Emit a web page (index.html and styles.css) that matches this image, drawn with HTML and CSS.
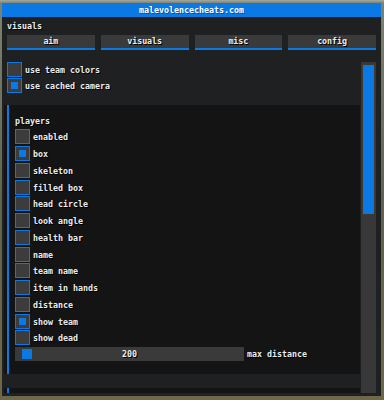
FILE: index.html
```html
<!DOCTYPE html>
<html lang="en">

<head>
    <meta charset="UTF-8">
    <meta name="viewport" content="width=device-width, initial-scale=1.0">
    <title>malevolencecheats.com</title>
    <link rel="stylesheet" href="styles.css">
</head>

<body>
    <div class="window">
        <div class="titlebar">malevolencecheats.com</div>

        <div class="window-body">
            <div class="section-label">visuals</div>

            <div class="tabs">
                <button type="button" class="tab">aim</button>
                <button type="button" class="tab">visuals</button>
                <button type="button" class="tab">misc</button>
                <button type="button" class="tab">config</button>
            </div>

            <div class="scroll">
                <div class="scroll-content">
                    <div class="rows">
                        <label class="check"><span class="box"></span>use team colors</label>
                        <label class="check"><span class="box on"></span>use cached camera</label>
                    </div>

                    <div class="group">
                        <div class="group-title">players</div>
                        <div class="group-rows">
                            <label class="check"><span class="box"></span>enabled</label>
                            <label class="check"><span class="box on"></span>box</label>
                            <label class="check"><span class="box"></span>skeleton</label>
                            <label class="check"><span class="box"></span>filled box</label>
                            <label class="check"><span class="box"></span>head circle</label>
                            <label class="check"><span class="box"></span>look angle</label>
                            <label class="check"><span class="box"></span>health bar</label>
                            <label class="check"><span class="box"></span>name</label>
                            <label class="check"><span class="box"></span>team name</label>
                            <label class="check"><span class="box"></span>item in hands</label>
                            <label class="check"><span class="box"></span>distance</label>
                            <label class="check"><span class="box on"></span>show team</label>
                            <label class="check"><span class="box"></span>show dead</label>
                            <div class="slider-row">
                                <div class="slider">
                                    <span class="grab"></span>
                                    <span class="slider-value">200</span>
                                </div>
                                <span>max distance</span>
                            </div>
                        </div>
                    </div>

                    <div class="group group-next"></div>
                </div>

                <div class="scrollbar">
                    <div class="thumb"></div>
                </div>
            </div>
        </div>
    </div>
</body>

</html>
```

FILE: styles.css
```css
body {
    margin: 0;
    height: 400px;
    background: linear-gradient(180deg, #a3aba2 0, #7d8270 3px, #5f6350 50%, #6e6849 100%);
    font-family: "DejaVu Sans Mono", "Liberation Mono", monospace;
    font-size: 8.3px;
    font-weight: bold;
    color: #ececec;
    overflow: hidden;
}

.window {
    width: 379px;
    height: 393px;
    margin: 3px 0 0 2px;
    background: #1f2022;
    display: flex;
    flex-direction: column;
}

.titlebar {
    height: 14px;
    line-height: 14px;
    background: #0b79e3;
    color: #fff;
    text-align: center;
    text-shadow: 1px 1px 0 rgba(0, 0, 0, 0.35);
}

.window-body {
    flex: 1;
    display: flex;
    flex-direction: column;
    padding: 0 5px 3px 5px;
    min-height: 0;
}

.section-label {
    line-height: 10px;
    margin-top: 4px;
    text-shadow: 1px 1px 0 #000;
}

.tabs {
    display: grid;
    grid-template-columns: repeat(4, 1fr);
    gap: 6px;
    margin-top: 4px;
}

.tab {
    height: 15px;
    padding: 0 0 2px;
    border: 0;
    border-bottom: 2px solid #0b79e3;
    background: #3a3a3a;
    color: inherit;
    font: inherit;
    line-height: 13px;
    text-shadow: 1px 1px 0 #000;
}

.scroll {
    flex: 1;
    display: flex;
    margin: 12px 0 0 -3px;
    min-height: 0;
    overflow: hidden;
}

.scroll-content {
    flex: 1;
    min-width: 0;
    overflow: hidden;
}

.rows {
    display: flex;
    flex-direction: column;
    gap: 1px;
    padding-left: 3px;
}

.check {
    display: flex;
    align-items: center;
    gap: 3px;
    height: 15px;
    text-shadow: 1px 1px 0 #000;
}

.box {
    width: 15px;
    height: 15px;
    box-sizing: border-box;
    border: 1px solid #0b79e3;
    background: #3c3c3c;
    display: flex;
    align-items: center;
    justify-content: center;
    flex: none;
}

.box.on::after {
    content: "";
    width: 7px;
    height: 7px;
    background: #0b79e3;
}

.group {
    margin-top: 12px;
    padding: 12px 0 12px 11px;
    background: linear-gradient(#0b79e3, #0b79e3) 3px 0 / 2px 100% no-repeat, #141414;
}

.group-title {
    line-height: 9px;
    margin-bottom: 3px;
    text-shadow: 1px 1px 0 #000;
}

.group-rows {
    display: grid;
    grid-template-rows: repeat(3, 17px 17px 17px 16px) 17px 15px;
    align-items: start;
}

.slider-row {
    display: flex;
    align-items: center;
    gap: 3px;
    text-shadow: 1px 1px 0 #000;
}

.slider {
    width: 229px;
    height: 14px;
    background: #3a3a3a;
    display: grid;
    align-items: center;
}

.grab,
.slider-value {
    grid-area: 1 / 1;
}

.grab {
    width: 10px;
    height: 10px;
    margin-left: 7px;
    background: #0b79e3;
    justify-self: start;
}

.slider-value {
    justify-self: center;
}

.group-next {
    margin-top: 14px;
    height: 20px;
    padding: 0;
}

.scrollbar {
    width: 15px;
    margin-left: 1px;
    background: #383838;
    padding: 2px 1px 0 1px;
    box-sizing: border-box;
}

.thumb {
    height: 151px;
    box-sizing: border-box;
    border: 1px solid #3f3a2c;
    background: #0b79e3;
}
```
